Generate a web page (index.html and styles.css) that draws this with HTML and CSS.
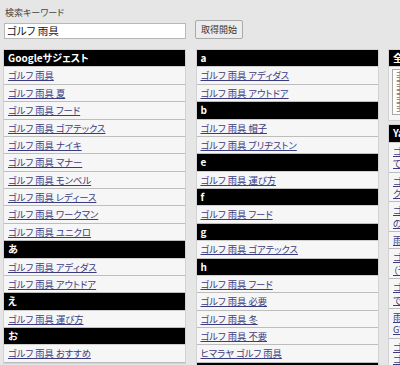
FILE: index.html
```html
<!DOCTYPE html>
<html>
<head>
    <meta charset="utf-8">
    <link rel="stylesheet" href="styles.css">
</head>
<body>
    <div class="search">
        <div class="label">検索キーワード</div>
        <div class="searchRow">
            <input class="keyword" type="text" value="ゴルフ 雨具">
            <button class="startButton" type="button">取得開始</button>
        </div>
    </div>

    <div class="columns">
        <!-- Google suggest -->
        <div class="col">
            <div class="list">
                <div class="head">Googleサジェスト</div>
                <div class="item"><a href="#">ゴルフ 雨具</a></div>
                <div class="item"><a href="#">ゴルフ 雨具 夏</a></div>
                <div class="item"><a href="#">ゴルフ 雨具 フード</a></div>
                <div class="item"><a href="#">ゴルフ 雨具 ゴアテックス</a></div>
                <div class="item"><a href="#">ゴルフ 雨具 ナイキ</a></div>
                <div class="item"><a href="#">ゴルフ 雨具 マナー</a></div>
                <div class="item"><a href="#">ゴルフ 雨具 モンベル</a></div>
                <div class="item"><a href="#">ゴルフ 雨具 レディース</a></div>
                <div class="item"><a href="#">ゴルフ 雨具 ワークマン</a></div>
                <div class="item"><a href="#">ゴルフ 雨具 ユニクロ</a></div>
                <div class="head">あ</div>
                <div class="item"><a href="#">ゴルフ 雨具 アディダス</a></div>
                <div class="item"><a href="#">ゴルフ 雨具 アウトドア</a></div>
                <div class="head">え</div>
                <div class="item"><a href="#">ゴルフ 雨具 運び方</a></div>
                <div class="head">お</div>
                <div class="item"><a href="#">ゴルフ 雨具 おすすめ</a></div>
            </div>
        </div>

        <!-- alphabet -->
        <div class="col">
            <div class="list">
                <div class="head">a</div>
                <div class="item"><a href="#">ゴルフ 雨具 アディダス</a></div>
                <div class="item"><a href="#">ゴルフ 雨具 アウトドア</a></div>
                <div class="head">b</div>
                <div class="item"><a href="#">ゴルフ 雨具 帽子</a></div>
                <div class="item"><a href="#">ゴルフ 雨具 ブリヂストン</a></div>
                <div class="head">e</div>
                <div class="item"><a href="#">ゴルフ 雨具 運び方</a></div>
                <div class="head">f</div>
                <div class="item"><a href="#">ゴルフ 雨具 フード</a></div>
                <div class="head">g</div>
                <div class="item"><a href="#">ゴルフ 雨具 ゴアテックス</a></div>
                <div class="head">h</div>
                <div class="item"><a href="#">ゴルフ 雨具 フード</a></div>
                <div class="item"><a href="#">ゴルフ 雨具 必要</a></div>
                <div class="item"><a href="#">ゴルフ 雨具 冬</a></div>
                <div class="item"><a href="#">ゴルフ 雨具 不要</a></div>
                <div class="item"><a href="#">ヒマラヤ ゴルフ 雨具</a></div>
                <div class="head">i</div>
            </div>
        </div>

        <!-- all keywords + yahoo -->
        <div class="col">
            <div class="list">
                <div class="head">全キーワード</div>
                <div class="boxRow">
                    <textarea class="allWords">ゴルフ 雨具
ゴルフ 雨具 夏
ゴルフ 雨具 フード
ゴルフ 雨具 ゴアテックス
ゴルフ 雨具 ナイキ
ゴルフ 雨具 マナー
ゴルフ 雨具 モンベル
ゴルフ 雨具 レディース
ゴルフ 雨具 ワークマン</textarea>
                </div>
            </div>
            <div class="list yahoo">
                <div class="head">Yahoo!知恵袋</div>
                <div class="item multi"><a href="#">ゴルフの雨具はどこのメーカーが良いか教えて<br>ておすすめはありますか</a></div>
                <div class="item multi"><a href="#">ゴルフ用の雨具を買おうと思っています<br>クラブハウスで着替えますか</a></div>
                <div class="item multi"><a href="#">ゴルフ場で急に雨が降ってきたときの<br>のんびりした雨具の使い方</a></div>
                <div class="item"><a href="#">雨の日のゴルフについて</a></div>
                <div class="item multi"><a href="#">ゴルフの雨具は上下セットで買うべきか<br>（予算は一万円程度）</a></div>
                <div class="item multi"><a href="#">ゴルフ雨具のおすすめを教えてください<br>できれば軽いものがいいです</a></div>
                <div class="item multi"><a href="#">雨具を忘れたらゴルフ場で借りられるか<br>GWにラウンド予定です</a></div>
                <div class="item multi"><a href="#">ゴルフの雨具について質問です<br>ゴアテックスは必要ですか</a></div>
            </div>
        </div>
    </div>
</body>
</html>
```

FILE: styles.css
```css
body {
    margin: 0;
    padding: 0 0 0 3px;
    background-color: #e6e6e6;
    font-family: "Noto Sans CJK JP", "Noto Sans", sans-serif;
    font-size: 9.3px;
    font-feature-settings: "palt";
    height: 365px;
    overflow: hidden;
}

.search {
    padding-top: 7px;
}

.label {
    height: 12px;
    line-height: 12px;
    font-size: 9px;
    color: #444;
    padding-left: 2px;
}

.searchRow {
    display: flex;
    align-items: center;
    gap: 9px;
    margin-top: 1px;
}

.keyword {
    box-sizing: border-box;
    width: 182px;
    height: 16px;
    margin: 2px 0 0 1px;
    padding: 0 2px;
    border: 1px solid #b8b8b8;
    background-color: white;
    font-family: inherit;
    font-size: 10.5px;
    font-feature-settings: "palt";
    color: #111;
    outline: none;
}

.startButton {
    box-sizing: border-box;
    width: 48px;
    height: 19px;
    padding: 0;
    border: 1px solid #a9a9a9;
    border-radius: 2px;
    background-color: #ececec;
    font-family: inherit;
    font-size: 9px;
    color: #333;
}

.columns {
    display: grid;
    grid-template-columns: 183px 183px 183px;
    column-gap: 9.5px;
    margin-top: 10px;
}

.list {
    border: 1px solid #d2d2d2;
    background-color: #f6f6f6;
}

.head {
    box-sizing: border-box;
    height: 17.375px;
    line-height: 16.4px;
    padding: 0 4px;
    background-color: black;
    color: white;
    font-size: 10px;
    font-weight: bold;
    white-space: nowrap;
    overflow: hidden;
    border-bottom: 1px solid #cfcfcf;
}

.item {
    box-sizing: border-box;
    min-height: 17.375px;
    line-height: 12.375px;
    padding: 2px 4px 2px 4px;
    border-bottom: 1px solid #bdbdbd;
    white-space: nowrap;
    overflow: hidden;
}

.item a {
    color: #3a3a80;
    text-decoration: underline;
}

.boxRow {
    padding: 2px 3px 5px 3px;
}

.allWords {
    box-sizing: border-box;
    display: block;
    width: 100%;
    height: 46px;
    margin: 0;
    padding: 1px 3px;
    border: 1px solid #a8a8a8;
    background-color: white;
    font-family: inherit;
    font-size: 4.5px;
    line-height: 4.4px;
    color: #333;
    resize: none;
    overflow: hidden;
}

.yahoo {
    margin-top: 3px;
}
```
